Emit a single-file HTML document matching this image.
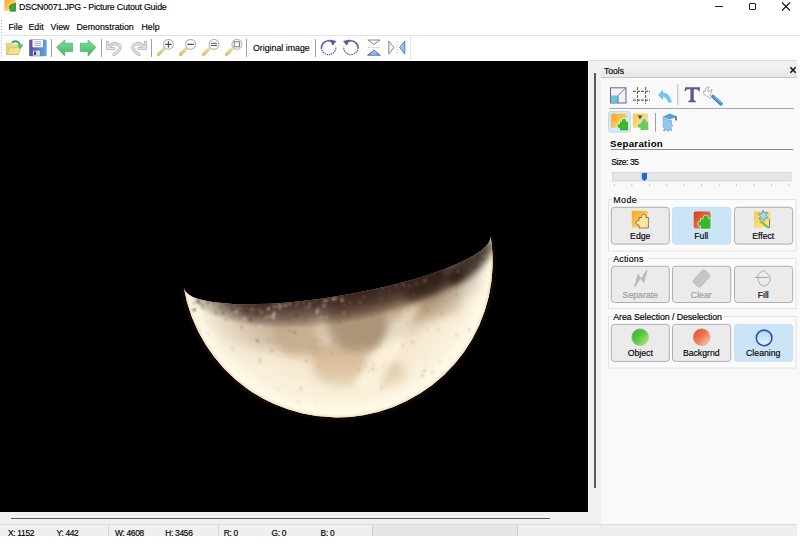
<!DOCTYPE html>
<html><head><meta charset="utf-8">
<style>
*{margin:0;padding:0;box-sizing:border-box}
html,body{width:800px;height:549px;overflow:hidden;background:#fff;font-family:"Liberation Sans",sans-serif;color:#000}
.a{position:absolute;white-space:pre}
.t{font-size:8.6px;line-height:10px;-webkit-text-stroke:0.15px currentColor}
#img{position:absolute;left:0;top:61px;width:588px;height:451px;background:#000;overflow:hidden}
</style></head><body>
<!-- title bar -->
<svg class="a" style="left:3px;top:0" width="14" height="13" viewBox="3 0 14 13">
<defs><linearGradient id="gti" x1="0" y1="0" x2="1" y2="1"><stop offset="0" stop-color="#f8a818"/><stop offset="1" stop-color="#fce8a0"/></linearGradient></defs>
<rect x="4.4" y="-1.5" width="11.2" height="12.5" rx="1.2" fill="url(#gti)"/>
<path d="M10.2 5.5q1-1.5 2.5-1.2q.8-1 2.9-1.3v8.3h-5.2v-1.6q-1.3-.5-.6-1.8q-.9-1.2.4-2.4z" fill="#2cb030" stroke="#404040" stroke-width=".55"/>
</svg>

<div class="a t" style="left:19px;top:2px;font-size:8.8px;letter-spacing:-0.17px">DSCN0071.JPG - Picture Cutout Guide</div>
<!-- window controls -->
<div class="a" style="left:715px;top:6px;width:8px;height:1px;background:#222"></div>
<div class="a" style="left:748.5px;top:2.5px;width:7.5px;height:7px;border:1px solid #222;border-radius:1px"></div>
<svg class="a" style="left:781px;top:2px" width="10" height="9" viewBox="0 0 10 9"><path d="M1 .5L9 8.5M9 .5L1 8.5" stroke="#111" stroke-width="1.1"/></svg>
<!-- menu -->
<svg class="a" style="left:0;top:18px" width="3" height="16" viewBox="0 18 3 16"><g fill="#b0b0b0"><rect x="1" y="20" width="1" height="1"/><rect x="1" y="23" width="1" height="1"/><rect x="1" y="26" width="1" height="1"/><rect x="1" y="29" width="1" height="1"/><rect x="1" y="32" width="1" height="1"/></g>
</svg>
<div class="a t" style="left:8.5px;top:22px;font-size:8.8px">File</div>
<div class="a t" style="left:28.5px;top:22px;font-size:8.8px">Edit</div>
<div class="a t" style="left:50.5px;top:22px;font-size:8.8px">View</div>
<div class="a t" style="left:76.5px;top:22px;font-size:8.8px">Demonstration</div>
<div class="a t" style="left:141.5px;top:22px;font-size:8.8px">Help</div>
<div class="a" style="left:0;top:35px;width:800px;height:1px;background:#e3e3e3"></div>
<!-- toolbar -->
<div class="a t" style="left:253px;top:43px;font-size:8.8px">Original image</div>
<div class="a" style="left:51px;top:39px;width:1px;height:18px;background:#a0a0a0"></div>
<div class="a" style="left:101px;top:39px;width:1px;height:18px;background:#a0a0a0"></div>
<div class="a" style="left:151px;top:39px;width:1px;height:18px;background:#a0a0a0"></div>
<div class="a" style="left:246px;top:39px;width:1px;height:18px;background:#a0a0a0"></div>
<div class="a" style="left:315px;top:39px;width:1px;height:18px;background:#a0a0a0"></div>
<div class="a" style="left:410px;top:36px;width:1px;height:24px;background:#e6e6e6"></div>

<svg class="a" style="left:0;top:36px" width="420" height="24" viewBox="0 36 420 24">
<defs>
<linearGradient id="gfold" x1="0" y1="0" x2="0" y2="1"><stop offset="0" stop-color="#f2dc8a"/><stop offset="1" stop-color="#e2cc70"/></linearGradient>
<linearGradient id="garr" x1="0" y1="0" x2="0" y2="1"><stop offset="0" stop-color="#7ee09a"/><stop offset="1" stop-color="#3cb864"/></linearGradient>
<linearGradient id="gsave" x1="0" y1="0" x2="1" y2="0"><stop offset="0" stop-color="#5a4aa8"/><stop offset="1" stop-color="#5ea8e0"/></linearGradient>
<linearGradient id="ghand" x1="0" y1="1" x2="1" y2="0"><stop offset="0" stop-color="#d8c070"/><stop offset="1" stop-color="#e8dca0"/></linearGradient>
<linearGradient id="gtri" x1="0" y1="0" x2="1" y2="0"><stop offset="0" stop-color="#8a7ad0"/><stop offset=".5" stop-color="#80d0f0"/><stop offset="1" stop-color="#8a7ad0"/></linearGradient>
</defs>
<g fill="#b0b0b0"><rect x="1" y="37.5" width="1" height="1"/><rect x="1" y="40.5" width="1" height="1"/><rect x="1" y="43.5" width="1" height="1"/><rect x="1" y="46.5" width="1" height="1"/><rect x="1" y="49.5" width="1" height="1"/><rect x="1" y="52.5" width="1" height="1"/><rect x="1" y="55.5" width="1" height="1"/></g>
<!-- open -->
<path d="M6.5 43.5h5l1 1.5h6v9.5h-12z" fill="url(#gfold)" stroke="#c8b060" stroke-width=".6"/>
<path d="M7 54.5l2.5-7h11.5l-2.5 7z" fill="#f0e090" stroke="#c8b060" stroke-width=".5"/>
<path d="M12 42.5q5-3 8 2" fill="none" stroke="#3cb060" stroke-width="2.2"/>
<path d="M17.5 44.5h6l-3.5 5z" fill="#48c070"/>
<!-- save -->
<rect x="29.2" y="39.5" width="17.5" height="16.8" rx="1.5" fill="url(#gsave)"/>
<rect x="32.5" y="40" width="10.5" height="7.3" fill="#f6f8fc"/>
<path d="M34.5 41.8h6.5M34.5 43.6h6.5M34.5 45.4h6.5" stroke="#9090a0" stroke-width=".7"/>
<rect x="33" y="50.7" width="7" height="5" fill="#d8dce8"/>
<rect x="34" y="51.5" width="2" height="3.5" fill="#404060"/>
<!-- arrows -->
<path d="M56.6 47.3L64.7 40v3.2h7.8v8.4h-7.8V56z" fill="url(#garr)" stroke="#40a060" stroke-width=".6"/>
<path d="M95.9 47.3L88.1 40v3.2h-7.8v8.4h7.8V56z" fill="url(#garr)" stroke="#40a060" stroke-width=".6"/>
<!-- undo/redo -->
<g fill="none" stroke-linecap="round" stroke-linejoin="round">
<path d="M107.5 42v6.5h6.5M108.5 47.5q5-6 10.5-2.5q4 3-5 9.5" stroke="#b4b4b4" stroke-width="3.2"/>
<path d="M107.5 42v6.5h6.5M108.5 47.5q5-6 10.5-2.5q4 3-5 9.5" stroke="#e2e2e2" stroke-width="1.6"/>
<path d="M145.5 42v6.5h-6.5M144.5 47.5q-5-6-10.5-2.5q-4 3 5 9.5" stroke="#b4b4b4" stroke-width="3.2"/>
<path d="M145.5 42v6.5h-6.5M144.5 47.5q-5-6-10.5-2.5q-4 3 5 9.5" stroke="#e2e2e2" stroke-width="1.6"/>
</g>
<!-- zoom icons -->
<g stroke-linecap="round">
<path d="M158.5 54.5l5.5-5.5" stroke="url(#ghand)" stroke-width="3.2"/>
<circle cx="168.4" cy="44.4" r="5" fill="#fafafa" stroke="#b8b8b8" stroke-width="1.1"/>
<path d="M165.6 44.4h5.6M168.4 41.6v5.6" stroke="#505050" stroke-width="1.1"/>
<path d="M180.5 54.5l5.5-5.5" stroke="url(#ghand)" stroke-width="3.2"/>
<circle cx="190.6" cy="44.4" r="5" fill="#fafafa" stroke="#b8b8b8" stroke-width="1.1"/>
<path d="M187.8 44.4h5.6" stroke="#505050" stroke-width="1.1"/>
<path d="M203.5 54.5l5.5-5.5" stroke="url(#ghand)" stroke-width="3.2"/>
<circle cx="214" cy="44.4" r="5" fill="#fafafa" stroke="#b8b8b8" stroke-width="1.1"/>
<path d="M211.5 43.3h5M211.5 45.5h5" stroke="#505050" stroke-width="1"/>
<path d="M226.5 54.5l5.5-5.5" stroke="url(#ghand)" stroke-width="3.2"/>
<circle cx="236.9" cy="44.4" r="5" fill="#fafafa" stroke="#b8b8b8" stroke-width="1.1"/>
<rect x="234.2" y="41.8" width="5.2" height="5" fill="none" stroke="#707070" stroke-width=".9"/>
</g>
<!-- rotate -->
<path d="M331 41.2A7.2 7.2 0 0 0 321.4 48" fill="none" stroke="#5a5aa0" stroke-width="1.5"/>
<path d="M321.4 48A7.2 7.2 0 1 0 335.8 46.8" fill="none" stroke="#5a5aa0" stroke-width="1.4" stroke-dasharray="1.3 .9"/>
<path d="M329.5 39.6l7 1.5-3.8 4.6z" fill="#5a5aa0"/>
<path d="M348.5 41.2A7.2 7.2 0 0 1 358.1 48" fill="none" stroke="#5a5aa0" stroke-width="1.5"/>
<path d="M358.1 48A7.2 7.2 0 1 1 343.7 46.8" fill="none" stroke="#5a5aa0" stroke-width="1.4" stroke-dasharray="1.3 .9"/>
<path d="M350 39.6l-7 1.5 3.8 4.6z" fill="#5a5aa0"/>
<!-- flip v -->
<path d="M367.8 40h12.2l-6.1 4.5z" fill="#f4f4f8" stroke="#6a6a80" stroke-width=".8"/>
<path d="M368 47.6h12" stroke="#909090" stroke-width=".8" stroke-dasharray="1 1.6"/>
<path d="M367.5 55.3h12.8l-6.4-5.3z" fill="url(#gtri)" stroke="#5a5aa0" stroke-width=".8"/>
<!-- flip h -->
<path d="M388.8 41v13l5.2-6.5z" fill="#f4f4f8" stroke="#6a6a80" stroke-width=".8"/>
<path d="M396.9 41.5v12.5" stroke="#909090" stroke-width=".8" stroke-dasharray="1 1.6"/>
<path d="M404.8 41v13l-5.2-6.5z" fill="#80d0f0" stroke="#5a5aa0" stroke-width=".8"/>
</svg>
<!-- image -->
<div id="img"></div>
<svg class="a" style="left:0;top:60px" width="588" height="451" viewBox="0 60 588 451">
<defs>
<radialGradient id="rim" gradientUnits="userSpaceOnUse" cx="337.2" cy="261.9" r="156.3">
<stop offset="0" stop-color="#fffbe8" stop-opacity="0"/>
<stop offset="0.66" stop-color="#fffbe8" stop-opacity="0"/>
<stop offset="0.88" stop-color="#fffae6" stop-opacity="0.6"/>
<stop offset="0.97" stop-color="#fffcea" stop-opacity="0.95"/>
<stop offset="1" stop-color="#f0dcc0" stop-opacity="1"/>
</radialGradient>
<linearGradient id="tmg" gradientUnits="userSpaceOnUse" x1="200" y1="0" x2="380" y2="0"><stop offset="0" stop-color="#fff" stop-opacity="1"/><stop offset="1" stop-color="#fff" stop-opacity="1"/></linearGradient>
<mask id="tmask" maskUnits="userSpaceOnUse" x="100" y="150" width="450" height="300"><rect x="100" y="150" width="450" height="300" fill="url(#tmg)"/></mask>
<clipPath id="below"><path d="M100 302.2L600 217.3L600 500L100 500Z"/></clipPath>
<clipPath id="mc"><path d="M183.89 287.92A155.5 155.5 0 1 0 490.51 235.88A155.5 33.86 -9.634 0 1 183.89 287.92Z"/></clipPath>
<filter id="b12" x="-50%" y="-50%" width="200%" height="200%"><feGaussianBlur color-interpolation-filters="sRGB" stdDeviation="12"/></filter>
<filter id="b8" x="-50%" y="-50%" width="200%" height="200%"><feGaussianBlur color-interpolation-filters="sRGB" stdDeviation="8"/></filter>
<filter id="b5" x="-50%" y="-50%" width="200%" height="200%"><feGaussianBlur color-interpolation-filters="sRGB" stdDeviation="5"/></filter>
<filter id="b3" x="-50%" y="-50%" width="200%" height="200%"><feGaussianBlur color-interpolation-filters="sRGB" stdDeviation="3"/></filter>
<filter id="b2" x="-50%" y="-50%" width="200%" height="200%"><feGaussianBlur color-interpolation-filters="sRGB" stdDeviation="2"/></filter>
<filter id="b1" x="-50%" y="-50%" width="200%" height="200%"><feGaussianBlur color-interpolation-filters="sRGB" stdDeviation="0.9"/></filter>
</defs>
<g clip-path="url(#below)"><circle cx="337.2" cy="261.9" r="156.8" fill="none" stroke="#3a1c10" stroke-width="2.5" opacity=".45" filter="url(#b1)"/></g>
<g clip-path="url(#mc)">
<rect x="150" y="200" width="360" height="230" fill="#f5e4cc"/>
<!-- maria -->
<g filter="url(#b5)">
<path d="M272 322Q290 312 312 318Q322 330 316 350Q300 362 282 352Q270 340 272 322Z" fill="#c8a680" opacity=".55"/>
<path d="M330 300Q356 292 385 298Q392 320 384 345Q372 356 352 352Q332 345 326 325Z" fill="#a08262" opacity=".65"/>
<path d="M312 345Q340 346 366 352Q370 370 360 385Q335 390 318 380Q308 362 312 345Z" fill="#c8a880" opacity=".6"/>
<ellipse cx="388" cy="374" rx="19" ry="13" fill="#c8a882" opacity=".75"/>
<path d="M385 295Q420 285 450 275Q470 290 460 315Q430 318 400 322Q385 312 385 295Z" fill="#b8966e" opacity=".6"/>
</g>
<ellipse cx="240" cy="332" rx="42" ry="24" fill="#b09070" opacity=".22" filter="url(#b8)"/>
<!-- bright strip -->
<path d="M352 386L380 345L405 308L420 305L400 350L378 388Z" fill="#fff4dc" opacity=".8" filter="url(#b3)"/>
<g mask="url(#tmask)"><g transform="rotate(-9.634 337.2 261.9)" fill="#1e0e04" filter="url(#b1)">
<ellipse cx="337.2" cy="261.9" rx="155.5" ry="35.7" opacity="0.095"/>
<ellipse cx="337.2" cy="261.9" rx="155.5" ry="37.4" opacity="0.095"/>
<ellipse cx="337.2" cy="261.9" rx="155.5" ry="39.1" opacity="0.095"/>
<ellipse cx="337.2" cy="261.9" rx="155.5" ry="40.8" opacity="0.095"/>
<ellipse cx="337.2" cy="261.9" rx="155.5" ry="42.5" opacity="0.095"/>
<ellipse cx="337.2" cy="261.9" rx="155.5" ry="44.2" opacity="0.095"/>
<ellipse cx="337.2" cy="261.9" rx="155.5" ry="45.9" opacity="0.095"/>
<ellipse cx="337.2" cy="261.9" rx="155.5" ry="47.6" opacity="0.095"/>
<ellipse cx="337.2" cy="261.9" rx="155.5" ry="49.3" opacity="0.095"/>
<ellipse cx="337.2" cy="261.9" rx="155.5" ry="51.0" opacity="0.095"/>
<ellipse cx="337.2" cy="261.9" rx="155.5" ry="52.7" opacity="0.095"/>
<ellipse cx="337.2" cy="261.9" rx="155.5" ry="54.4" opacity="0.095"/>
<ellipse cx="337.2" cy="261.9" rx="155.5" ry="56.1" opacity="0.095"/>
<ellipse cx="337.2" cy="261.9" rx="155.5" ry="57.8" opacity="0.095"/>
<ellipse cx="337.2" cy="261.9" rx="155.5" ry="59.5" opacity="0.095"/>
<ellipse cx="337.2" cy="261.9" rx="155.5" ry="61.2" opacity="0.095"/>
<ellipse cx="337.2" cy="261.9" rx="155.5" ry="90" opacity="0.1" filter="url(#b5)"/>
</g></g>
<path d="M340 292Q400 280 470 250L500 245L500 290Q440 300 400 296Q370 302 340 300Z" fill="#1a1410" opacity=".3" filter="url(#b8)"/>

<rect x="150" y="100" width="360" height="330" fill="url(#rim)"/>
<ellipse cx="471" cy="263" rx="30" ry="10" transform="rotate(-45 471 263)" fill="#1e0e04" opacity=".7" filter="url(#b3)"/>
<ellipse cx="434" cy="285" rx="32" ry="9" transform="rotate(-24 434 285)" fill="#1e0e04" opacity=".45" filter="url(#b3)"/>
<g filter="url(#b1)">
<circle cx="290.8" cy="304.6" r="1.4" fill="#e8d4b8" opacity="0.44"/>
<circle cx="303.2" cy="302.4" r="1.2" fill="#e8d4b8" opacity="0.40"/>
<circle cx="213.4" cy="304.0" r="1.1" fill="#302418" opacity="0.29"/>
<circle cx="261.8" cy="313.8" r="1.7" fill="#302418" opacity="0.39"/>
<circle cx="482.1" cy="261.8" r="0.9" fill="#e8d4b8" opacity="0.13"/>
<circle cx="288.5" cy="318.5" r="0.8" fill="#302418" opacity="0.47"/>
<circle cx="306.3" cy="308.7" r="0.7" fill="#e8d4b8" opacity="0.32"/>
<circle cx="396.4" cy="287.0" r="1.3" fill="#302418" opacity="0.16"/>
<circle cx="429.3" cy="277.0" r="1.3" fill="#302418" opacity="0.25"/>
<circle cx="413.6" cy="300.6" r="0.7" fill="#302418" opacity="0.23"/>
<circle cx="239.6" cy="311.1" r="0.6" fill="#302418" opacity="0.52"/>
<circle cx="367.7" cy="310.8" r="1.0" fill="#302418" opacity="0.21"/>
<circle cx="367.5" cy="297.3" r="1.6" fill="#302418" opacity="0.19"/>
<circle cx="392.3" cy="292.3" r="1.4" fill="#302418" opacity="0.24"/>
<circle cx="279.5" cy="308.4" r="1.4" fill="#e8d4b8" opacity="0.41"/>
<circle cx="243.7" cy="306.3" r="0.7" fill="#302418" opacity="0.30"/>
<circle cx="268.4" cy="309.1" r="1.6" fill="#e8d4b8" opacity="0.41"/>
<circle cx="360.9" cy="312.7" r="1.6" fill="#302418" opacity="0.16"/>
<circle cx="318.6" cy="304.0" r="1.7" fill="#302418" opacity="0.30"/>
<circle cx="246.4" cy="307.6" r="0.9" fill="#e8d4b8" opacity="0.46"/>
<circle cx="272.2" cy="304.5" r="1.1" fill="#e8d4b8" opacity="0.45"/>
<circle cx="474.7" cy="259.9" r="1.3" fill="#302418" opacity="0.12"/>
<circle cx="460.9" cy="274.3" r="1.6" fill="#302418" opacity="0.18"/>
<circle cx="225.3" cy="313.2" r="0.7" fill="#e8d4b8" opacity="0.32"/>
<circle cx="242.4" cy="308.9" r="0.7" fill="#e8d4b8" opacity="0.30"/>
<circle cx="223.8" cy="308.2" r="0.6" fill="#302418" opacity="0.46"/>
<circle cx="238.0" cy="307.6" r="1.0" fill="#e8d4b8" opacity="0.29"/>
<circle cx="445.3" cy="273.1" r="1.2" fill="#e8d4b8" opacity="0.13"/>
<circle cx="296.7" cy="305.3" r="1.6" fill="#e8d4b8" opacity="0.26"/>
<circle cx="473.7" cy="257.5" r="1.3" fill="#e8d4b8" opacity="0.20"/>
<circle cx="482.1" cy="257.6" r="0.9" fill="#302418" opacity="0.14"/>
<circle cx="423.9" cy="285.1" r="1.0" fill="#302418" opacity="0.24"/>
<circle cx="484.2" cy="258.4" r="1.6" fill="#302418" opacity="0.15"/>
<circle cx="348.9" cy="299.3" r="0.6" fill="#e8d4b8" opacity="0.16"/>
<circle cx="272.9" cy="315.0" r="1.7" fill="#e8d4b8" opacity="0.58"/>
<circle cx="484.0" cy="251.9" r="0.9" fill="#302418" opacity="0.14"/>
<circle cx="256.1" cy="313.8" r="1.7" fill="#302418" opacity="0.42"/>
<circle cx="388.1" cy="287.5" r="1.4" fill="#302418" opacity="0.24"/>
<circle cx="416.5" cy="280.5" r="1.5" fill="#302418" opacity="0.24"/>
<circle cx="479.6" cy="255.6" r="1.7" fill="#302418" opacity="0.14"/>
<circle cx="231.2" cy="306.2" r="1.7" fill="#302418" opacity="0.30"/>
<circle cx="439.2" cy="277.7" r="1.0" fill="#302418" opacity="0.13"/>
<circle cx="201.0" cy="330.3" r="1.4" fill="#e8d4b8" opacity="0.58"/>
<circle cx="326.5" cy="317.5" r="1.6" fill="#e8d4b8" opacity="0.34"/>
<circle cx="281.7" cy="306.3" r="1.3" fill="#e8d4b8" opacity="0.40"/>
<circle cx="235.9" cy="326.2" r="1.0" fill="#e8d4b8" opacity="0.45"/>
<circle cx="462.6" cy="275.8" r="1.2" fill="#302418" opacity="0.19"/>
<circle cx="198.0" cy="304.6" r="0.8" fill="#e8d4b8" opacity="0.53"/>
<circle cx="245.8" cy="310.9" r="1.5" fill="#302418" opacity="0.36"/>
<circle cx="349.7" cy="302.5" r="1.5" fill="#e8d4b8" opacity="0.20"/>
<circle cx="268.4" cy="307.6" r="1.5" fill="#e8d4b8" opacity="0.45"/>
<circle cx="419.7" cy="281.6" r="1.3" fill="#302418" opacity="0.19"/>
<circle cx="400.3" cy="288.0" r="1.2" fill="#302418" opacity="0.22"/>
<circle cx="452.9" cy="268.4" r="1.3" fill="#302418" opacity="0.24"/>
<circle cx="234.3" cy="306.1" r="1.1" fill="#e8d4b8" opacity="0.33"/>
<circle cx="216.0" cy="313.1" r="1.5" fill="#302418" opacity="0.30"/>
<circle cx="406.6" cy="283.1" r="1.7" fill="#302418" opacity="0.15"/>
<circle cx="474.5" cy="259.7" r="1.8" fill="#302418" opacity="0.14"/>
<circle cx="323.8" cy="305.8" r="1.0" fill="#e8d4b8" opacity="0.36"/>
<circle cx="408.9" cy="285.9" r="1.1" fill="#e8d4b8" opacity="0.16"/>
<circle cx="380.6" cy="295.4" r="0.7" fill="#302418" opacity="0.24"/>
<circle cx="479.5" cy="254.6" r="0.6" fill="#302418" opacity="0.16"/>
<circle cx="232.6" cy="309.7" r="1.7" fill="#302418" opacity="0.34"/>
<circle cx="241.6" cy="327.4" r="1.3" fill="#302418" opacity="0.28"/>
<circle cx="211.2" cy="312.8" r="1.1" fill="#e8d4b8" opacity="0.58"/>
<circle cx="382.7" cy="288.8" r="1.6" fill="#e8d4b8" opacity="0.25"/>
<circle cx="330.0" cy="302.1" r="1.3" fill="#302418" opacity="0.34"/>
<circle cx="232.8" cy="311.5" r="0.9" fill="#e8d4b8" opacity="0.31"/>
<circle cx="207.5" cy="304.1" r="1.0" fill="#e8d4b8" opacity="0.52"/>
<circle cx="281.5" cy="310.1" r="0.8" fill="#e8d4b8" opacity="0.26"/>
<circle cx="268.5" cy="304.8" r="1.5" fill="#302418" opacity="0.32"/>
<circle cx="339.7" cy="321.7" r="0.7" fill="#302418" opacity="0.40"/>
<circle cx="344.3" cy="312.5" r="1.1" fill="#e8d4b8" opacity="0.49"/>
<circle cx="483.6" cy="259.7" r="1.4" fill="#302418" opacity="0.18"/>
<circle cx="297.8" cy="302.9" r="0.8" fill="#e8d4b8" opacity="0.51"/>
<circle cx="270.3" cy="306.2" r="0.7" fill="#302418" opacity="0.55"/>
<circle cx="393.4" cy="287.2" r="1.0" fill="#302418" opacity="0.14"/>
<circle cx="327.4" cy="301.5" r="1.8" fill="#302418" opacity="0.44"/>
<circle cx="271.8" cy="334.7" r="1.0" fill="#e8d4b8" opacity="0.25"/>
<circle cx="308.8" cy="307.0" r="1.2" fill="#e8d4b8" opacity="0.43"/>
<circle cx="193.1" cy="300.4" r="0.7" fill="#e8d4b8" opacity="0.26"/>
<circle cx="198.9" cy="303.1" r="0.9" fill="#302418" opacity="0.44"/>
<circle cx="417.5" cy="285.7" r="1.7" fill="#302418" opacity="0.16"/>
<circle cx="483.8" cy="256.7" r="1.4" fill="#e8d4b8" opacity="0.24"/>
<circle cx="458.1" cy="271.6" r="1.6" fill="#e8d4b8" opacity="0.19"/>
<circle cx="347.0" cy="312.0" r="1.6" fill="#302418" opacity="0.20"/>
<circle cx="458.2" cy="270.8" r="0.9" fill="#e8d4b8" opacity="0.13"/>
<circle cx="301.8" cy="303.0" r="1.6" fill="#302418" opacity="0.47"/>
<circle cx="381.9" cy="299.1" r="1.2" fill="#e8d4b8" opacity="0.24"/>
<circle cx="416.4" cy="283.5" r="1.4" fill="#e8d4b8" opacity="0.23"/>
<circle cx="269.2" cy="305.3" r="0.9" fill="#302418" opacity="0.32"/>
<circle cx="413.9" cy="283.8" r="1.1" fill="#302418" opacity="0.22"/>
<circle cx="422.0" cy="283.2" r="0.7" fill="#e8d4b8" opacity="0.15"/>
<circle cx="415.0" cy="284.3" r="0.6" fill="#e8d4b8" opacity="0.15"/>
<circle cx="394.5" cy="291.3" r="0.9" fill="#302418" opacity="0.19"/>
<circle cx="333.3" cy="299.0" r="1.7" fill="#e8d4b8" opacity="0.59"/>
<circle cx="470.0" cy="262.0" r="1.6" fill="#302418" opacity="0.18"/>
<circle cx="274.4" cy="306.5" r="1.7" fill="#e8d4b8" opacity="0.45"/>
<circle cx="236.6" cy="311.6" r="1.7" fill="#e8d4b8" opacity="0.54"/>
<circle cx="348.9" cy="315.2" r="1.4" fill="#302418" opacity="0.25"/>
<circle cx="339.0" cy="297.2" r="0.6" fill="#e8d4b8" opacity="0.41"/>
<circle cx="284.3" cy="305.0" r="1.0" fill="#e8d4b8" opacity="0.54"/>
<circle cx="193.7" cy="309.4" r="1.6" fill="#e8d4b8" opacity="0.57"/>
<circle cx="405.8" cy="284.3" r="1.0" fill="#302418" opacity="0.27"/>
<circle cx="370.0" cy="295.3" r="1.1" fill="#302418" opacity="0.12"/>
<circle cx="225.9" cy="320.2" r="0.9" fill="#302418" opacity="0.34"/>
<circle cx="274.2" cy="310.8" r="0.8" fill="#e8d4b8" opacity="0.58"/>
<circle cx="455.7" cy="270.9" r="1.7" fill="#302418" opacity="0.20"/>
<circle cx="408.5" cy="288.6" r="1.1" fill="#302418" opacity="0.21"/>
<circle cx="279.4" cy="304.5" r="1.7" fill="#e8d4b8" opacity="0.42"/>
<circle cx="297.1" cy="305.7" r="1.5" fill="#302418" opacity="0.34"/>
<circle cx="389.6" cy="290.9" r="1.1" fill="#e8d4b8" opacity="0.14"/>
<circle cx="259.2" cy="326.1" r="1.2" fill="#e8d4b8" opacity="0.57"/>
<circle cx="486.0" cy="248.3" r="0.8" fill="#e8d4b8" opacity="0.17"/>
<circle cx="220.3" cy="306.4" r="0.9" fill="#302418" opacity="0.56"/>
<circle cx="416.6" cy="282.2" r="1.2" fill="#302418" opacity="0.17"/>
<circle cx="211.4" cy="305.6" r="1.8" fill="#e8d4b8" opacity="0.43"/>
<circle cx="384.2" cy="306.3" r="0.9" fill="#302418" opacity="0.15"/>
<circle cx="314.2" cy="305.9" r="1.7" fill="#302418" opacity="0.56"/>
<circle cx="198.2" cy="300.1" r="1.5" fill="#302418" opacity="0.42"/>
<circle cx="368.7" cy="291.4" r="1.1" fill="#302418" opacity="0.24"/>
<circle cx="446.9" cy="270.7" r="0.7" fill="#e8d4b8" opacity="0.19"/>
<circle cx="397.6" cy="291.3" r="1.4" fill="#302418" opacity="0.18"/>
<circle cx="358.3" cy="293.9" r="1.5" fill="#302418" opacity="0.26"/>
<circle cx="386.0" cy="288.3" r="0.9" fill="#302418" opacity="0.22"/>
<circle cx="226.5" cy="305.2" r="1.2" fill="#302418" opacity="0.39"/>
<circle cx="261.8" cy="313.2" r="0.6" fill="#e8d4b8" opacity="0.41"/>
<circle cx="477.5" cy="266.0" r="1.2" fill="#302418" opacity="0.15"/>
<circle cx="476.5" cy="256.9" r="0.6" fill="#302418" opacity="0.22"/>
<circle cx="319.8" cy="302.5" r="1.4" fill="#302418" opacity="0.33"/>
<circle cx="202.7" cy="304.6" r="1.1" fill="#302418" opacity="0.32"/>
<circle cx="430.5" cy="278.8" r="0.8" fill="#302418" opacity="0.16"/>
<circle cx="436.7" cy="274.3" r="1.5" fill="#302418" opacity="0.26"/>
<circle cx="342.1" cy="298.3" r="0.9" fill="#e8d4b8" opacity="0.48"/>
<circle cx="473.4" cy="259.5" r="0.9" fill="#302418" opacity="0.13"/>
<circle cx="207.8" cy="302.7" r="1.1" fill="#302418" opacity="0.56"/>
<circle cx="413.5" cy="294.3" r="1.0" fill="#e8d4b8" opacity="0.26"/>
<circle cx="416.1" cy="285.3" r="1.1" fill="#302418" opacity="0.16"/>
<circle cx="243.9" cy="305.2" r="0.9" fill="#e8d4b8" opacity="0.58"/>
<circle cx="235.0" cy="334.3" r="0.8" fill="#e8d4b8" opacity="0.54"/>
<circle cx="437.1" cy="273.1" r="1.2" fill="#302418" opacity="0.26"/>
<circle cx="251.8" cy="309.2" r="1.7" fill="#e8d4b8" opacity="0.39"/>
<circle cx="434.2" cy="274.1" r="0.6" fill="#e8d4b8" opacity="0.26"/>
<circle cx="272.6" cy="316.8" r="1.7" fill="#e8d4b8" opacity="0.35"/>
<circle cx="475.7" cy="257.1" r="1.5" fill="#302418" opacity="0.16"/>
<circle cx="194.4" cy="309.9" r="1.7" fill="#302418" opacity="0.58"/>
<circle cx="199.3" cy="302.4" r="1.2" fill="#302418" opacity="0.58"/>
<circle cx="309.8" cy="303.7" r="1.1" fill="#e8d4b8" opacity="0.57"/>
<circle cx="250.5" cy="319.6" r="1.5" fill="#302418" opacity="0.52"/>
<circle cx="375.2" cy="293.7" r="1.0" fill="#302418" opacity="0.24"/>
<circle cx="216.5" cy="305.4" r="1.5" fill="#e8d4b8" opacity="0.27"/>
<circle cx="203.2" cy="308.0" r="1.0" fill="#302418" opacity="0.56"/>
<circle cx="483.6" cy="250.1" r="0.7" fill="#302418" opacity="0.22"/>
<circle cx="327.7" cy="301.1" r="1.1" fill="#302418" opacity="0.49"/>
<circle cx="416.6" cy="285.1" r="0.7" fill="#302418" opacity="0.16"/>
<circle cx="363.5" cy="296.8" r="1.5" fill="#e8d4b8" opacity="0.15"/>
<circle cx="267.2" cy="306.2" r="1.7" fill="#302418" opacity="0.36"/>
<circle cx="319.5" cy="344.2" r="1.2" fill="#e8d4b8" opacity="0.53"/>
<circle cx="388.2" cy="287.6" r="1.2" fill="#302418" opacity="0.24"/>
<circle cx="463.6" cy="263.9" r="0.7" fill="#e8d4b8" opacity="0.27"/>
<circle cx="371.6" cy="315.3" r="1.0" fill="#302418" opacity="0.18"/>
<circle cx="273.7" cy="317.9" r="1.7" fill="#e8d4b8" opacity="0.46"/>
<circle cx="378.7" cy="291.5" r="1.0" fill="#e8d4b8" opacity="0.14"/>
<circle cx="271.2" cy="312.7" r="1.4" fill="#e8d4b8" opacity="0.25"/>
<circle cx="293.3" cy="313.1" r="0.8" fill="#e8d4b8" opacity="0.32"/>
<circle cx="429.4" cy="275.8" r="0.7" fill="#302418" opacity="0.20"/>
<circle cx="384.1" cy="288.9" r="1.4" fill="#302418" opacity="0.16"/>
<circle cx="290.3" cy="330.7" r="1.0" fill="#302418" opacity="0.38"/>
<circle cx="321.3" cy="317.7" r="1.8" fill="#e8d4b8" opacity="0.32"/>
<circle cx="409.9" cy="281.4" r="1.7" fill="#302418" opacity="0.24"/>
<circle cx="318.4" cy="319.5" r="1.2" fill="#e8d4b8" opacity="0.26"/>
<circle cx="359.8" cy="302.6" r="1.7" fill="#e8d4b8" opacity="0.21"/>
<circle cx="305.7" cy="307.9" r="0.8" fill="#e8d4b8" opacity="0.43"/>
<circle cx="467.0" cy="263.9" r="1.6" fill="#302418" opacity="0.14"/>
<circle cx="235.2" cy="330.2" r="1.8" fill="#e8d4b8" opacity="0.27"/>
<circle cx="468.6" cy="272.1" r="1.3" fill="#302418" opacity="0.14"/>
<circle cx="427.1" cy="278.9" r="1.6" fill="#302418" opacity="0.14"/>
<circle cx="259.5" cy="309.6" r="1.2" fill="#e8d4b8" opacity="0.29"/>
<circle cx="269.4" cy="316.2" r="1.7" fill="#e8d4b8" opacity="0.45"/>
<circle cx="420.0" cy="287.9" r="0.7" fill="#302418" opacity="0.20"/>
<circle cx="381.0" cy="292.1" r="1.1" fill="#302418" opacity="0.18"/>
<circle cx="390.2" cy="289.5" r="0.6" fill="#302418" opacity="0.19"/>
<circle cx="266.1" cy="317.7" r="1.5" fill="#e8d4b8" opacity="0.31"/>
<circle cx="335.3" cy="298.6" r="0.8" fill="#e8d4b8" opacity="0.28"/>
<circle cx="326.9" cy="305.3" r="0.6" fill="#302418" opacity="0.28"/>
<circle cx="412.1" cy="284.5" r="0.7" fill="#302418" opacity="0.17"/>
<circle cx="475.1" cy="266.3" r="1.8" fill="#302418" opacity="0.24"/>
<circle cx="257.4" cy="340.7" r="1.2" fill="#302418" opacity="0.57"/>
<circle cx="245.0" cy="319.0" r="1.7" fill="#e8d4b8" opacity="0.37"/>
<circle cx="420.0" cy="290.2" r="0.9" fill="#302418" opacity="0.14"/>
<circle cx="347.5" cy="318.6" r="0.8" fill="#302418" opacity="0.19"/>
<circle cx="289.2" cy="303.6" r="0.8" fill="#e8d4b8" opacity="0.58"/>
<circle cx="396.0" cy="286.1" r="1.5" fill="#e8d4b8" opacity="0.20"/>
<circle cx="384.9" cy="298.4" r="1.3" fill="#302418" opacity="0.25"/>
<circle cx="231.6" cy="348.3" r="1.4" fill="#e8d4b8" opacity="0.53"/>
<circle cx="279.9" cy="345.8" r="1.3" fill="#e8d4b8" opacity="0.52"/>
<circle cx="326.2" cy="300.7" r="1.5" fill="#e8d4b8" opacity="0.54"/>
<circle cx="271.0" cy="313.7" r="1.8" fill="#302418" opacity="0.48"/>
<circle cx="287.2" cy="303.4" r="0.6" fill="#e8d4b8" opacity="0.47"/>
<circle cx="324.0" cy="305.8" r="1.7" fill="#e8d4b8" opacity="0.33"/>
<circle cx="388.1" cy="287.1" r="1.0" fill="#e8d4b8" opacity="0.17"/>
<circle cx="261.9" cy="312.8" r="1.3" fill="#e8d4b8" opacity="0.47"/>
<circle cx="335.8" cy="298.8" r="1.7" fill="#e8d4b8" opacity="0.30"/>
<circle cx="222.9" cy="313.1" r="1.6" fill="#302418" opacity="0.39"/>
<circle cx="272.7" cy="304.6" r="1.4" fill="#302418" opacity="0.37"/>
<circle cx="388.2" cy="301.3" r="1.5" fill="#302418" opacity="0.25"/>
<circle cx="206.3" cy="308.4" r="1.1" fill="#e8d4b8" opacity="0.27"/>
<circle cx="425.3" cy="281.0" r="1.7" fill="#e8d4b8" opacity="0.14"/>
<circle cx="375.9" cy="296.4" r="1.4" fill="#302418" opacity="0.14"/>
<circle cx="286.8" cy="306.7" r="0.7" fill="#302418" opacity="0.52"/>
<circle cx="407.8" cy="291.6" r="1.5" fill="#302418" opacity="0.23"/>
<circle cx="329.3" cy="300.8" r="0.7" fill="#e8d4b8" opacity="0.26"/>
<circle cx="296.2" cy="315.1" r="1.4" fill="#302418" opacity="0.50"/>
<circle cx="274.4" cy="311.6" r="1.1" fill="#302418" opacity="0.43"/>
<circle cx="274.5" cy="313.5" r="1.8" fill="#e8d4b8" opacity="0.56"/>
<circle cx="196.4" cy="301.7" r="0.9" fill="#302418" opacity="0.58"/>
<circle cx="416.9" cy="290.4" r="1.0" fill="#302418" opacity="0.26"/>
<circle cx="383.3" cy="299.1" r="1.4" fill="#302418" opacity="0.19"/>
<circle cx="443.8" cy="280.6" r="1.1" fill="#302418" opacity="0.20"/>
<circle cx="286.1" cy="305.7" r="1.3" fill="#e8d4b8" opacity="0.57"/>
<circle cx="236.4" cy="305.3" r="0.7" fill="#302418" opacity="0.37"/>
<circle cx="235.6" cy="305.3" r="0.6" fill="#302418" opacity="0.47"/>
<circle cx="400.9" cy="284.2" r="1.3" fill="#302418" opacity="0.24"/>
<circle cx="436.4" cy="273.5" r="1.6" fill="#302418" opacity="0.26"/>
<circle cx="225.2" cy="306.4" r="0.7" fill="#e8d4b8" opacity="0.55"/>
<circle cx="435.6" cy="282.5" r="1.4" fill="#302418" opacity="0.13"/>
<circle cx="224.1" cy="316.7" r="0.8" fill="#e8d4b8" opacity="0.40"/>
<circle cx="198.3" cy="302.3" r="0.9" fill="#302418" opacity="0.38"/>
<circle cx="294.7" cy="332.7" r="1.2" fill="#302418" opacity="0.47"/>
<circle cx="201.9" cy="305.4" r="1.1" fill="#302418" opacity="0.37"/>
<circle cx="403.3" cy="284.5" r="1.6" fill="#e8d4b8" opacity="0.24"/>
<circle cx="244.2" cy="305.2" r="0.8" fill="#302418" opacity="0.59"/>
<circle cx="193.4" cy="303.5" r="1.2" fill="#302418" opacity="0.31"/>
<circle cx="342.1" cy="300.3" r="1.6" fill="#e8d4b8" opacity="0.58"/>
<circle cx="278.9" cy="306.2" r="1.4" fill="#e8d4b8" opacity="0.29"/>
<circle cx="384.5" cy="295.9" r="1.4" fill="#302418" opacity="0.21"/>
<circle cx="300.9" cy="306.7" r="1.1" fill="#302418" opacity="0.28"/>
<circle cx="456.2" cy="266.6" r="0.9" fill="#302418" opacity="0.19"/>
<circle cx="310.4" cy="320.5" r="0.9" fill="#e8d4b8" opacity="0.44"/>
<circle cx="418.4" cy="284.3" r="1.0" fill="#302418" opacity="0.14"/>
<circle cx="444.2" cy="277.4" r="0.8" fill="#302418" opacity="0.23"/>
<circle cx="366.6" cy="293.1" r="1.2" fill="#302418" opacity="0.15"/>
<circle cx="251.2" cy="308.4" r="1.4" fill="#302418" opacity="0.30"/>
<circle cx="240.3" cy="307.7" r="1.0" fill="#e8d4b8" opacity="0.31"/>
<circle cx="292.2" cy="304.9" r="1.8" fill="#302418" opacity="0.29"/>
<circle cx="477.1" cy="257.1" r="1.8" fill="#302418" opacity="0.23"/>
<circle cx="324.1" cy="301.2" r="1.4" fill="#e8d4b8" opacity="0.32"/>
<circle cx="309.9" cy="301.4" r="1.1" fill="#302418" opacity="0.49"/>
<circle cx="344.7" cy="305.1" r="1.2" fill="#e8d4b8" opacity="0.21"/>
<circle cx="316.8" cy="312.5" r="1.7" fill="#e8d4b8" opacity="0.45"/>
<circle cx="416.2" cy="280.9" r="1.5" fill="#302418" opacity="0.23"/>
<circle cx="402.7" cy="289.2" r="1.4" fill="#302418" opacity="0.16"/>
<circle cx="381.0" cy="289.7" r="1.1" fill="#302418" opacity="0.22"/>
<circle cx="381.6" cy="291.3" r="1.1" fill="#302418" opacity="0.21"/>
<circle cx="317.8" cy="310.3" r="1.7" fill="#e8d4b8" opacity="0.48"/>
<circle cx="425.0" cy="280.4" r="1.8" fill="#e8d4b8" opacity="0.20"/>
<circle cx="243.6" cy="318.7" r="1.7" fill="#e8d4b8" opacity="0.29"/>
<circle cx="366.2" cy="299.1" r="1.5" fill="#302418" opacity="0.21"/>
<circle cx="439.5" cy="274.8" r="1.7" fill="#302418" opacity="0.22"/>
<circle cx="313.3" cy="313.7" r="0.7" fill="#302418" opacity="0.37"/>
<circle cx="207.0" cy="322.9" r="0.9" fill="#8a7258" opacity="0.20"/>
<circle cx="315.6" cy="340.5" r="1.1" fill="#8a7258" opacity="0.31"/>
<circle cx="269.5" cy="316.9" r="1.2" fill="#8a7258" opacity="0.48"/>
<circle cx="348.1" cy="316.3" r="1.2" fill="#8a7258" opacity="0.32"/>
<circle cx="253.6" cy="305.5" r="1.2" fill="#8a7258" opacity="0.44"/>
<circle cx="380.3" cy="346.3" r="1.0" fill="#8a7258" opacity="0.27"/>
<circle cx="381.6" cy="388.2" r="1.2" fill="#8a7258" opacity="0.34"/>
<circle cx="278.3" cy="355.8" r="0.6" fill="#8a7258" opacity="0.45"/>
<circle cx="296.4" cy="392.1" r="0.7" fill="#8a7258" opacity="0.31"/>
<circle cx="266.1" cy="341.1" r="0.7" fill="#8a7258" opacity="0.20"/>
<circle cx="406.5" cy="323.7" r="0.7" fill="#8a7258" opacity="0.29"/>
<circle cx="333.9" cy="341.4" r="1.1" fill="#8a7258" opacity="0.40"/>
<circle cx="298.7" cy="401.4" r="1.3" fill="#8a7258" opacity="0.22"/>
<circle cx="425.2" cy="306.8" r="1.2" fill="#8a7258" opacity="0.39"/>
<circle cx="232.8" cy="318.0" r="1.2" fill="#8a7258" opacity="0.30"/>
<circle cx="427.5" cy="310.1" r="1.3" fill="#8a7258" opacity="0.38"/>
<circle cx="424.4" cy="370.2" r="1.3" fill="#8a7258" opacity="0.44"/>
<circle cx="441.6" cy="313.7" r="1.1" fill="#8a7258" opacity="0.36"/>
<circle cx="412.6" cy="342.6" r="1.3" fill="#8a7258" opacity="0.37"/>
<circle cx="269.3" cy="318.1" r="0.6" fill="#8a7258" opacity="0.35"/>
<circle cx="233.3" cy="349.0" r="0.9" fill="#8a7258" opacity="0.36"/>
<circle cx="448.9" cy="290.8" r="1.3" fill="#8a7258" opacity="0.34"/>
<circle cx="358.8" cy="369.8" r="1.3" fill="#8a7258" opacity="0.31"/>
<circle cx="315.6" cy="405.3" r="0.6" fill="#8a7258" opacity="0.39"/>
<circle cx="380.8" cy="293.4" r="1.0" fill="#8a7258" opacity="0.40"/>
<circle cx="469.4" cy="329.7" r="1.4" fill="#8a7258" opacity="0.35"/>
<circle cx="335.4" cy="397.7" r="0.5" fill="#8a7258" opacity="0.42"/>
<circle cx="377.6" cy="330.6" r="1.3" fill="#8a7258" opacity="0.31"/>
<circle cx="332.4" cy="353.1" r="1.2" fill="#8a7258" opacity="0.26"/>
<circle cx="320.6" cy="340.7" r="1.0" fill="#8a7258" opacity="0.45"/>
<circle cx="277.9" cy="389.3" r="0.9" fill="#8a7258" opacity="0.35"/>
<circle cx="271.5" cy="350.8" r="1.4" fill="#8a7258" opacity="0.40"/>
<circle cx="427.6" cy="329.7" r="0.8" fill="#8a7258" opacity="0.29"/>
<circle cx="365.9" cy="366.2" r="1.2" fill="#8a7258" opacity="0.21"/>
<circle cx="406.8" cy="396.3" r="1.0" fill="#8a7258" opacity="0.21"/>
<circle cx="372.6" cy="369.0" r="1.2" fill="#8a7258" opacity="0.47"/>
<circle cx="373.5" cy="364.0" r="1.1" fill="#8a7258" opacity="0.41"/>
<circle cx="368.9" cy="371.7" r="0.7" fill="#8a7258" opacity="0.40"/>
<circle cx="327.4" cy="381.5" r="0.6" fill="#8a7258" opacity="0.25"/>
<circle cx="300.7" cy="388.7" r="1.2" fill="#8a7258" opacity="0.37"/>
<circle cx="267.4" cy="326.2" r="0.9" fill="#8a7258" opacity="0.30"/>
<circle cx="319.2" cy="367.0" r="1.3" fill="#8a7258" opacity="0.22"/>
<circle cx="360.3" cy="294.7" r="0.6" fill="#8a7258" opacity="0.44"/>
<circle cx="362.6" cy="400.2" r="0.9" fill="#8a7258" opacity="0.20"/>
<circle cx="306.1" cy="361.0" r="1.3" fill="#8a7258" opacity="0.49"/>
<circle cx="332.6" cy="339.5" r="0.6" fill="#8a7258" opacity="0.39"/>
<circle cx="253.7" cy="308.2" r="0.5" fill="#8a7258" opacity="0.20"/>
<circle cx="395.1" cy="304.6" r="1.4" fill="#8a7258" opacity="0.23"/>
<circle cx="450.9" cy="305.5" r="0.5" fill="#8a7258" opacity="0.42"/>
<circle cx="262.7" cy="378.0" r="0.7" fill="#8a7258" opacity="0.22"/>
<circle cx="422.2" cy="375.6" r="1.3" fill="#8a7258" opacity="0.42"/>
<circle cx="402.8" cy="345.3" r="1.3" fill="#8a7258" opacity="0.28"/>
<circle cx="385.2" cy="388.1" r="0.6" fill="#8a7258" opacity="0.29"/>
<circle cx="408.8" cy="309.9" r="1.3" fill="#8a7258" opacity="0.35"/>
<circle cx="207.9" cy="334.1" r="1.0" fill="#8a7258" opacity="0.33"/>
<circle cx="393.1" cy="307.4" r="1.2" fill="#8a7258" opacity="0.31"/>
<circle cx="383.5" cy="365.6" r="0.9" fill="#8a7258" opacity="0.32"/>
<circle cx="425.4" cy="358.0" r="0.8" fill="#8a7258" opacity="0.22"/>
<circle cx="438.2" cy="329.8" r="1.0" fill="#8a7258" opacity="0.49"/>
<circle cx="439.4" cy="362.1" r="0.8" fill="#8a7258" opacity="0.33"/>
<circle cx="456.4" cy="335.2" r="1.1" fill="#8a7258" opacity="0.38"/>
<circle cx="268.9" cy="340.7" r="1.0" fill="#8a7258" opacity="0.44"/>
<circle cx="456.2" cy="295.1" r="1.2" fill="#8a7258" opacity="0.44"/>
<circle cx="450.2" cy="358.6" r="0.7" fill="#8a7258" opacity="0.46"/>
<circle cx="432.1" cy="372.2" r="1.3" fill="#8a7258" opacity="0.30"/>
<circle cx="215.5" cy="356.4" r="1.2" fill="#8a7258" opacity="0.26"/>
<circle cx="260.2" cy="362.8" r="1.1" fill="#8a7258" opacity="0.34"/>
<circle cx="252.0" cy="320.6" r="1.2" fill="#8a7258" opacity="0.44"/>
<circle cx="327.9" cy="300.5" r="1.2" fill="#8a7258" opacity="0.43"/>
<circle cx="259.9" cy="359.6" r="1.3" fill="#8a7258" opacity="0.47"/>
<circle cx="346.6" cy="347.2" r="1.0" fill="#8a7258" opacity="0.26"/>
</g>
</g>
</svg>

<!-- right grey strip & panel -->
<div class="a" style="left:588px;top:60px;width:209px;height:465px;background:#f0f0f0;border-top:1px solid #dadada"></div>
<div class="a" style="left:594px;top:73px;width:1.5px;height:415px;background:#5a5a5a"></div>
<div class="a" style="left:601px;top:65px;width:199px;height:460px;background:#f9f9f9"></div>
<div class="a" style="left:601px;top:65px;width:196px;height:13px;background:linear-gradient(#f4f4f4,#e6e6e6);border-bottom:1px solid #c8c8c8"></div>
<div class="a t" style="left:604px;top:65.5px;font-size:8.6px">Tools</div>

<!-- panel content -->
<svg class="a" style="left:789px;top:66px" width="8" height="8" viewBox="0 0 8 8"><path d="M1.3 1.3L6.7 6.7M6.7 1.3L1.3 6.7" stroke="#111" stroke-width="1.5"/></svg>
<svg class="a" style="left:601px;top:78px" width="196" height="300" viewBox="601 78 196 300">
<defs>
<linearGradient id="gorg" x1="0" y1="0" x2="1" y2="1"><stop offset="0" stop-color="#f8a818"/><stop offset="1" stop-color="#fce090"/></linearGradient>
<linearGradient id="gyel" x1="0" y1="0" x2="1" y2="1"><stop offset="0" stop-color="#f8c850"/><stop offset="1" stop-color="#f8e8a0"/></linearGradient>
<linearGradient id="gred" x1="0" y1="0" x2="1" y2="1"><stop offset="0" stop-color="#d83810"/><stop offset="1" stop-color="#f89070"/></linearGradient>
<linearGradient id="ggrn" x1="0" y1="0" x2="1" y2="1"><stop offset="0" stop-color="#40c030"/><stop offset="1" stop-color="#10a010"/></linearGradient>
<linearGradient id="gblue" x1="0" y1="0" x2="1" y2="1"><stop offset="0" stop-color="#4080d0"/><stop offset="1" stop-color="#60b8f0"/></linearGradient>
<linearGradient id="cgrn" x1="0" y1="0" x2="1" y2="1"><stop offset="0" stop-color="#34a830"/><stop offset=".5" stop-color="#60c848"/><stop offset="1" stop-color="#c0f070"/></linearGradient>
<linearGradient id="cred" x1="0" y1="0" x2="1" y2="1"><stop offset="0" stop-color="#e04828"/><stop offset=".5" stop-color="#f07858"/><stop offset="1" stop-color="#fcd8b0"/></linearGradient>
<linearGradient id="cblu" x1="0" y1="0" x2="0" y2="1"><stop offset="0" stop-color="#a8d4f4"/><stop offset="1" stop-color="#e8f8ff"/></linearGradient>
</defs>
<!-- row1 -->
<rect x="610.5" y="87.8" width="15.5" height="15.2" fill="#f4f0fc" stroke="#666688" stroke-width="1"/>
<rect x="611" y="95.5" width="7" height="7" fill="#60c8e0"/>
<path d="M618 95.5L626 87.8M618 95.5v7.5" stroke="#666688" stroke-width=".9"/>
<path d="M637.5 87v17M645.6 87v17M633 91.4h17M633 100.1h17" stroke="#686868" stroke-width="1.1" stroke-dasharray="3 1"/>
<path d="M658 95l5-5.5v3q7 .5 9 10h-4q-1-5-5-5.5v3z" fill="#74c4f0"/>
<rect x="677.3" y="84" width="1" height="21" fill="#b8b8b8"/>
<path d="M685.2 87.3h14.6v4h-1q-.5-2-3-2h-2v10.8l2 1v1.2h-7.4v-1.2l2-1V89.3h-2q-2.5 0-3 2h-1z" fill="#5e5898"/>
<path d="M705.2 91.5q-.5-4 3.5-4.5l1 .3-2.3 2.6 1.6 2 2.7-2.3q1 3.5-2 5.3l2 2-1.8 1.6-2.2-2.2q-3.5 0-4.5-4.8z" fill="#fbfbfb" stroke="#9a9a9a" stroke-width=".8"/>
<path d="M713 96.5l8 7.3" stroke="#3c8ed8" stroke-width="3.6" stroke-linecap="round"/>
<path d="M714 96.5l6.5 6" stroke="#8cc8f4" stroke-width="1" stroke-linecap="round"/>
<rect x="609" y="108" width="185" height="1" fill="#a8a8a8"/>
<!-- row2 -->
<rect x="608.6" y="111.6" width="21.6" height="20.4" rx="1.5" fill="#d4eafa" stroke="#a8d4f4" stroke-width=".8"/>
<rect x="611" y="113.8" width="15.6" height="14" rx="1.5" fill="url(#gorg)"/>
<g stroke="#fff" stroke-width="1.2" fill="#38b830" paint-order="stroke"><path d="M620 121.5h2.2a2 2 0 1 1 3.6 0h2.4v9h-8.2v-2.6a2 2 0 1 1 0-3.8z"/></g>
<rect x="632.8" y="113.5" width="15.2" height="14.4" rx="1.5" fill="url(#gyel)"/>
<path d="M637.5 115.5h5l-2.5 4z" fill="#405088"/>
<g stroke="#fff" stroke-width="1" fill="#6cc860" paint-order="stroke"><path d="M640.5 121.5h2a2 2 0 1 1 3.6 0h2.2v8.5h-7.8v-2.4a2 2 0 1 1 0-3.7z"/></g>
<rect x="655" y="113" width="1" height="18.6" fill="#a0a0a0"/>
<path d="M662 117l8-3.5 7 3-7 3z" fill="#5aa0d8"/>
<path d="M663 118.5q1 5 0 8l1.5 2-1 2.5 3-1 2 1.5 1-2 2.5 1-1-3 2-2-2-1.5 1-3z" fill="#90c8f0" stroke="#6080c0" stroke-width=".5"/>
<path d="M676 116.5v4" stroke="#404050" stroke-width="1.3"/>
<!-- separation -->
<rect x="611" y="149" width="182" height="1" fill="#8a8a8a"/>
<!-- slider -->
<rect x="612.5" y="172.5" width="178.5" height="8.5" fill="#e6e6e6" stroke="#d4d4d4" stroke-width=".8"/>
<path d="M641.8 173h5.2v6l-2.6 2-2.6-2z" fill="#1a70d0"/>
<g fill="#a8a8a8">
<rect x="614" y="184.5" width=".8" height="1.5"/><rect x="631.5" y="184.5" width=".8" height="1.5"/><rect x="649" y="184.5" width=".8" height="1.5"/><rect x="666.4" y="184.5" width=".8" height="1.5"/><rect x="683.9" y="184.5" width=".8" height="1.5"/><rect x="701.3" y="184.5" width=".8" height="1.5"/><rect x="718.8" y="184.5" width=".8" height="1.5"/><rect x="736.2" y="184.5" width=".8" height="1.5"/><rect x="753.7" y="184.5" width=".8" height="1.5"/><rect x="771.1" y="184.5" width=".8" height="1.5"/><rect x="788.5" y="184.5" width=".8" height="1.5"/>
</g>
<!-- group boxes -->
<rect x="608.5" y="199.5" width="187.5" height="51.5" fill="#fbfbfb" stroke="#e2e2e2" stroke-width="1"/>
<rect x="608.5" y="258.5" width="187.5" height="50" fill="#fbfbfb" stroke="#e2e2e2" stroke-width="1"/>
<rect x="608.5" y="316.5" width="187.5" height="51.5" fill="#fbfbfb" stroke="#e2e2e2" stroke-width="1"/>
<rect x="612" y="195" width="26" height="8" fill="#fbfbfb"/>
<rect x="612" y="254" width="36" height="8" fill="#fbfbfb"/>
<rect x="612" y="312" width="112" height="8" fill="#fbfbfb"/>
<!-- buttons -->
<g stroke="#a6a6a6" stroke-width=".9">
<rect x="611.3" y="207.3" width="58" height="36.8" rx="3" fill="#ebebeb"/>
<rect x="672.5" y="207.3" width="58.3" height="36.8" rx="3" fill="#cce4f8" stroke="#c4def4"/>
<rect x="734.5" y="207.3" width="58.2" height="36.8" rx="3" fill="#ebebeb"/>
<rect x="611.3" y="266.3" width="58" height="36.2" rx="3" fill="#ebebeb"/>
<rect x="672.5" y="266.3" width="58.3" height="36.2" rx="3" fill="#ebebeb"/>
<rect x="734.5" y="266.3" width="58.2" height="36.2" rx="3" fill="#ebebeb"/>
<rect x="611.3" y="324.4" width="58" height="37" rx="3" fill="#ebebeb"/>
<rect x="672.5" y="324.4" width="58.3" height="37" rx="3" fill="#ebebeb"/>
<rect x="734.5" y="324.4" width="58.2" height="37" rx="3" fill="#cce4f8" stroke="#c4def4"/>
</g>
<!-- mode icons -->
<rect x="631.8" y="210.7" width="16" height="16.8" rx="1.5" fill="url(#gorg)"/>
<path d="M639 217.5h2.6a2.3 2.3 0 1 1 4.2 0h2.6v10.5h-9.4v-3a2.3 2.3 0 1 1 0-4.4z" fill="#fce4a0" stroke="#5a5048" stroke-width=".7"/>
<rect x="693.7" y="211.6" width="16.8" height="16.8" rx="2" fill="url(#gred)"/>
<path d="M701 218.5h2.6a2.3 2.3 0 1 1 4.2 0h2.8v10.3h-9.6v-3a2.3 2.3 0 1 1 0-4.4z" fill="#38b830" stroke="#fff" stroke-width="1.1" paint-order="stroke"/>
<rect x="754" y="211.6" width="16.5" height="16.1" rx="1.5" fill="url(#gyel)"/>
<path d="M760 221l9 7" stroke="#70c050" stroke-width="2.2"/>
<path d="M763 210l1.5 3 3.2-.5-1.5 3 2 2.5-3.2.3-1 3-1.8-2.6-3.2.5 1.5-2.8-2-2.5 3.2-.2z" fill="#90e0f0" stroke="#607080" stroke-width=".6"/>
<path d="M769.5 219v9" stroke="#707070" stroke-width=".9"/>
<!-- action icons -->
<path d="M634.5 287l3.5-12.5 3.2 4.5 5.8-9-3.2 12.5-3.3-4.5z" fill="#bdbdbd" stroke="#b4b4b4" stroke-width=".9" stroke-linejoin="round"/>
<rect x="696.5" y="270" width="10" height="17" rx="2.5" transform="rotate(42 701.5 278.5)" fill="#c6c6c6" stroke="#b8b8b8" stroke-width=".6"/>
<path d="M757 276.5q3-5 7-6l5.5 5q2 6-2 9t-7 .5q-2-3-2.5-7zM755 277.5h14" fill="none" stroke="#909090" stroke-width=".7"/>
<!-- area icons -->
<circle cx="640.1" cy="337.2" r="8.4" fill="url(#cgrn)" stroke="#a0b8a0" stroke-width=".6"/>
<circle cx="701.6" cy="337.2" r="8.4" fill="url(#cred)" stroke="#c0a0a0" stroke-width=".6"/>
<circle cx="764.1" cy="337.9" r="7.8" fill="url(#cblu)" stroke="#3050a8" stroke-width="1.6"/>
</svg>
<div class="a" style="left:610px;top:139px;font-size:9.7px;font-weight:bold;line-height:10px;letter-spacing:.3px">Separation</div>
<div class="a t" style="left:611.2px;top:156.5px;font-size:8.6px;letter-spacing:-.45px">Size: 35</div>
<div class="a t" style="left:613.3px;top:195px;font-size:8.8px;letter-spacing:.45px">Mode</div>
<div class="a t" style="left:613.3px;top:253.5px;font-size:8.8px;letter-spacing:.2px">Actions</div>
<div class="a t" style="left:613.3px;top:312px;font-size:8.8px;letter-spacing:-.07px">Area Selection / Deselection</div>
<div class="a t" style="left:611px;top:231px;width:58.5px;text-align:center;font-size:8.7px">Edge</div>
<div class="a t" style="left:672px;top:231px;width:58.5px;text-align:center;font-size:8.7px">Full</div>
<div class="a t" style="left:734px;top:231px;width:58.5px;text-align:center;font-size:8.7px">Effect</div>
<div class="a t" style="left:611px;top:289.5px;width:58.5px;text-align:center;font-size:8.7px;color:#9a9a9a">Separate</div>
<div class="a t" style="left:672px;top:289.5px;width:58.5px;text-align:center;font-size:8.7px;color:#9a9a9a">Clear</div>
<div class="a t" style="left:734px;top:289.5px;width:58.5px;text-align:center;font-size:8.7px">Fill</div>
<div class="a t" style="left:611px;top:347.5px;width:58.5px;text-align:center;font-size:8.7px">Object</div>
<div class="a t" style="left:672px;top:347.5px;width:58.5px;text-align:center;font-size:8.7px">Backgrnd</div>
<div class="a t" style="left:734px;top:347.5px;width:58.5px;text-align:center;font-size:8.7px">Cleaning</div>

<!-- bottom scroll strip -->
<div class="a" style="left:0;top:512px;width:588px;height:13px;background:#f0f0f0"></div>
<div class="a" style="left:11px;top:517.5px;width:539px;height:1.5px;background:#5a5a5a"></div>
<!-- status bar -->
<div class="a" style="left:0;top:524px;width:797px;height:12px;background:#efefef;border-top:1px solid #dcdcdc"></div>
<div class="a t" style="left:8px;top:527.8px;font-size:8.4px;letter-spacing:-0.3px">X: 1152</div>
<div class="a t" style="left:56.5px;top:527.8px;font-size:8.4px;letter-spacing:-0.3px">Y: 442</div>
<div class="a t" style="left:115px;top:527.8px;font-size:8.4px;letter-spacing:-0.3px">W: 4608</div>
<div class="a t" style="left:165.3px;top:527.8px;font-size:8.4px;letter-spacing:-0.3px">H: 3456</div>
<div class="a t" style="left:223.7px;top:527.8px;font-size:8.4px;letter-spacing:-0.3px">R: 0</div>
<div class="a t" style="left:271.5px;top:527.8px;font-size:8.4px;letter-spacing:-0.3px">G: 0</div>
<div class="a t" style="left:320.6px;top:527.8px;font-size:8.4px;letter-spacing:-0.3px">B: 0</div>
<div class="a" style="left:108px;top:525px;width:1px;height:11px;background:#d5d5d5"></div>
<div class="a" style="left:218px;top:525px;width:1px;height:11px;background:#d5d5d5"></div>
<div class="a" style="left:372px;top:525px;width:146px;height:11px;background:#e6e6e6;border-left:1px solid #d0d0d0;border-right:1px solid #d0d0d0"></div>
</body></html>
